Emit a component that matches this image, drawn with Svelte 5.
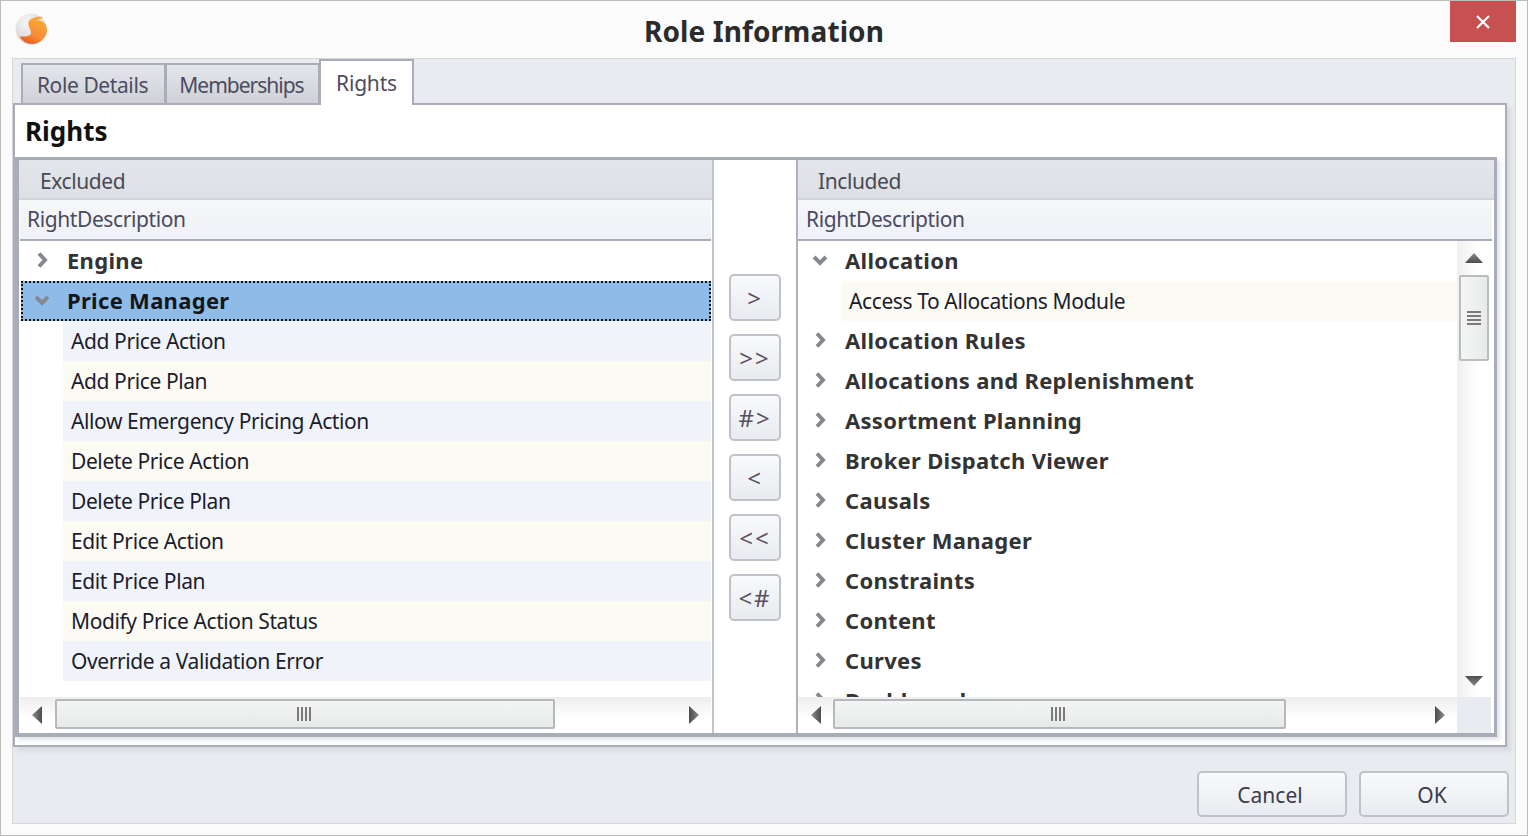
<script>
  const tabs = [
    { name: "Role Details", width: 144 },
    { name: "Memberships", width: 154 },
  ];
  const excluded = [
    { name: "Engine", open: false },
    {
      name: "Price Manager",
      open: true,
      selected: true,
      children: [
        "Add Price Action",
        "Add Price Plan",
        "Allow Emergency Pricing Action",
        "Delete Price Action",
        "Delete Price Plan",
        "Edit Price Action",
        "Edit Price Plan",
        "Modify Price Action Status",
        "Override a Validation Error",
      ],
    },
  ];
  const included = [
    { name: "Allocation", open: true, odd: true, children: ["Access To Allocations Module"] },
    { name: "Allocation Rules" },
    { name: "Allocations and Replenishment" },
    { name: "Assortment Planning" },
    { name: "Broker Dispatch Viewer" },
    { name: "Causals" },
    { name: "Cluster Manager" },
    { name: "Constraints" },
    { name: "Content" },
    { name: "Curves" },
    { name: "Dashboard" },
  ];
  const moves = [">", ">>", "#>", "<", "<<", "<#"];
</script>

{#snippet arrow(dir)}
  <svg class="arrow {dir}" width="18" height="10" viewBox="0 0 18 10">
    <defs>
      <linearGradient id="arrow-fill" x1="0" y1="0" x2="0" y2="1">
        <stop offset="0" stop-color="#8b8b8b" />
        <stop offset="1" stop-color="#4c4c4c" />
      </linearGradient>
    </defs>
    <polygon points="9,0 18,10 0,10" fill="url(#arrow-fill)" />
  </svg>
{/snippet}

{#snippet hbar(side)}
  <div class="hscroll {side}">
    {@render arrow("left")}
    <div class="hthumb">
      <svg width="14" height="14" viewBox="0 0 14 14">
        <path d="M1 0v14M5 0v14M9 0v14M13 0v14" stroke="#7b7b7b" stroke-width="2" />
      </svg>
    </div>
    {@render arrow("right")}
  </div>
{/snippet}

{#snippet tree(nodes)}
  {#each nodes as node}
    <div class="row" class:selected={node.selected}>
      <svg class="chevron" width="14" height="16" viewBox="0 0 14 16">
        {#if node.open}
          <path d="M1 5l6 6 6-6" fill="none" stroke="#85888f" stroke-width="4" />
        {:else}
          <path d="M4 1.500l6 6.500-6 6.500" fill="none" stroke="#85888f" stroke-width="4" />
        {/if}
      </svg>
      <span>{node.name}</span>
    </div>
    {#each node.children ?? [] as child, i}
      <div class="child" class:cream={node.odd ? i % 2 === 0 : i % 2 === 1}>{child}</div>
    {/each}
  {/each}
{/snippet}

<div class="window">
  <header class="titlebar">
    <div class="logo">
      <svg width="32" height="32" viewBox="0 0 32 32">
        <defs>
          <radialGradient id="ball" cx="0.4" cy="0.3" r="0.75">
            <stop offset="0" stop-color="#f6f6f6" />
            <stop offset="0.7" stop-color="#dcdcdc" />
            <stop offset="1" stop-color="#c9c9c9" />
          </radialGradient>
          <linearGradient id="ess" x1="0.75" y1="0.1" x2="0.25" y2="1">
            <stop offset="0" stop-color="#f9a63a" />
            <stop offset="0.6" stop-color="#f98c34" />
            <stop offset="1" stop-color="#ea5522" />
          </linearGradient>
          <filter id="soft" x="-10%" y="-10%" width="120%" height="120%">
            <feGaussianBlur stdDeviation="0.7" />
          </filter>
        </defs>
        <g filter="url(#soft)">
          <circle cx="16" cy="16" r="15.500" fill="url(#ball)" />
          <path
            d="M28 4C22 3 15 5 13.500 9 12.500 13 16 16 16 20 16 23 10 24 4.500 23.500 7 28 12 31 18 31 26 30 32 24 32 17 32 11 28 7 22 7.500 24 6.500 26 5.500 28 4z"
            fill="url(#ess)"
          />
        </g>
      </svg>
    </div>
    <h1>Role Information</h1>
    <div class="controls">
      <div class="close">
        <svg width="14" height="14" viewBox="0 0 14 14">
          <path d="M1 1l12 12M13 1L1 13" stroke="#fff" stroke-width="2.200" />
        </svg>
      </div>
    </div>
  </header>

  <div class="client">
    <div class="tabstrip">
      {#each tabs as tab}
        <div class="tab" style="width: {tab.width}px">{tab.name}</div>
      {/each}
      <div class="tab active">Rights</div>
    </div>

    <section class="page">
      <h2>Rights</h2>
      <div class="picker">
        <div class="pane left">
          <div class="group">Excluded</div>
          <div class="colhead">RightDescription</div>
          <div class="list">
            {@render tree(excluded)}
          </div>
          {@render hbar("short")}
        </div>

        <div class="movers">
          {#each moves as move}
            <button class="move">{move}</button>
          {/each}
        </div>

        <div class="pane right">
          <div class="group">Included</div>
          <div class="colhead">RightDescription</div>
          <div class="grid">
            <div class="list">
              {@render tree(included)}
            </div>
            <div class="vscroll">
              {@render arrow("up")}
              <div class="vthumb">
                <svg width="14" height="14" viewBox="0 0 14 14">
                  <path d="M0 1h14M0 5h14M0 9h14M0 13h14" stroke="#7b7b7b" stroke-width="2" />
                </svg>
              </div>
              {@render arrow("down")}
            </div>
            {@render hbar("long")}
            <div class="corner"></div>
          </div>
        </div>
      </div>
    </section>

    <footer class="actions">
      <button class="action">Cancel</button>
      <button class="action">OK</button>
    </footer>
  </div>
</div>

<style>
  :global(body) {
    background: #fff;
  }

  * {
    box-sizing: border-box;
  }

  .window {
    width: 1528px;
    height: 836px;
    border: 1px solid #bcbcbc;
    background: #fbfbfc;
    display: flex;
    flex-direction: column;
    font-family: "Noto Sans", sans-serif;
    font-size: 21px;
    letter-spacing: -0.4px;
    color: #222;
    overflow: hidden;
  }

  .titlebar {
    height: 57px;
    flex: none;
    display: grid;
    grid-template-columns: 1fr auto 1fr;
    align-items: start;
  }

  .logo {
    padding: 12px 0 0 14px;
    height: 44px;
  }

  .logo svg {
    display: block;
  }

  h1 {
    margin: 10px 0 0;
    font-size: 28px;
    line-height: 40px;
    font-weight: 700;
    letter-spacing: 0.1px;
    color: #2b2b2b;
  }

  .controls {
    display: flex;
    justify-content: flex-end;
    padding-right: 11px;
  }

  .close {
    width: 66px;
    height: 41px;
    background: #c75050;
    display: flex;
    align-items: center;
    justify-content: center;
  }

  .client {
    flex: none;
    margin-left: 11px;
    width: 1504px;
    height: 766px;
    border: 1px solid #d5d7da;
    background: #e8ebef;
  }

  .tabstrip {
    height: 44px;
    padding-left: 8px;
    display: flex;
    align-items: flex-end;
    position: relative;
    z-index: 1;
  }

  .tab {
    height: 40px;
    padding-right: 2px;
    border: 2px solid #a8adb7;
    border-right-width: 1px;
    border-bottom: none;
    background: linear-gradient(#e4e6ea, #ced1d7);
    color: #4c4c60;
    letter-spacing: -0.4px;
    line-height: 41px;
    text-align: center;
  }

  .tab:nth-child(2) {
    letter-spacing: -1px;
  }

  .tab.active {
    width: 95px;
    height: 46px;
    margin-bottom: -2px;
    padding-right: 0;
    border-right-width: 2px;
    background: #fff;
    letter-spacing: -0.2px;
    line-height: 45px;
  }

  .page {
    width: 1494px;
    height: 644px;
    border: 2px solid #a8adb7;
    background: #fff;
    box-shadow: 4px 4px 4px #d6d9df;
  }

  h2 {
    margin: 0;
    height: 52px;
    padding-left: 10px;
    font-size: 26px;
    line-height: 52px;
    font-weight: 700;
    letter-spacing: 0;
    color: #111;
  }

  .picker {
    width: 1482px;
    height: 580px;
    border: 3px solid #a8adb7;
    border-left-width: 4px;
    border-bottom-width: 4px;
    display: grid;
    grid-template-columns: 695px 82px 698px;
    box-shadow: 3px 3px 4px #e2e4e8;
  }

  .pane {
    display: flex;
    flex-direction: column;
    min-height: 0;
  }

  .pane.left {
    border-right: 2px solid #c0c4cb;
  }

  .pane.right {
    border-left: 2px solid #aeb2ba;
  }

  .group {
    height: 40px;
    flex: none;
    padding-left: 21px;
    line-height: 43px;
    color: #4a4a55;
    background: linear-gradient(#e3e6ea, #dcdfe4);
    border-bottom: 2px solid #d0d3d8;
  }

  .right .group {
    padding-left: 20px;
  }

  .colhead {
    height: 41px;
    flex: none;
    margin: 0 1px;
    padding-left: 7px;
    line-height: 39px;
    color: #4a4a60;
    background: linear-gradient(#f6f7f9, #eef1f6);
    border-bottom: 2px solid #a8adb7;
  }

  .right .colhead {
    margin: 0 2px 0 0;
    padding-left: 8px;
  }

  .list {
    overflow: hidden;
    height: 456px;
    flex: none;
    margin: 0 1px 0 2px;
  }

  .right .list {
    margin: 0;
    padding-left: 1px;
  }

  .row {
    height: 40px;
    display: flex;
    align-items: center;
    padding: 0 0 2px 14px;
    font-size: 22px;
    font-weight: 700;
    letter-spacing: 0.3px;
    color: #333;
  }

  .row.selected {
    background: #8fbbe9;
    outline: 2px dotted #111;
    outline-offset: -2px;
    color: #161616;
  }

  .chevron {
    flex: none;
    margin-right: 18px;
  }

  .child {
    height: 40px;
    margin-left: 42px;
    padding-left: 8px;
    line-height: 40px;
    color: #1c1c2c;
    background: #f0f4fa;
  }

  .child.cream {
    background: #fbfbf4;
  }

  .movers {
    padding: 114px 0 0 15px;
    display: flex;
    flex-direction: column;
    gap: 13px;
  }

  button {
    font: inherit;
    color: inherit;
    padding: 0;
  }

  .move {
    width: 52px;
    height: 47px;
    padding-bottom: 1px;
    border: 2px solid #bfc2c7;
    border-radius: 5px;
    background: linear-gradient(#f8fafc, #e8ebef);
    color: #5a5060;
    font-size: 24px;
    letter-spacing: 2px;
  }

  .grid {
    display: grid;
    grid-template-columns: 659px 34px;
    grid-template-rows: 456px 36px;
  }

  .vscroll {
    background: linear-gradient(90deg, #efefef, #fff 60%);
    display: flex;
    flex-direction: column;
    align-items: center;
    padding-top: 12px;
  }

  .vthumb {
    width: 30px;
    height: 86px;
    margin-top: 12px;
    border: 2px solid #b9bcc1;
    border-radius: 2px;
    background: linear-gradient(90deg, #f4f5f5, #e8e9e9);
    display: flex;
    align-items: center;
    justify-content: center;
  }

  .vthumb svg,
  .hthumb svg {
    display: block;
  }

  .vscroll .arrow.down {
    margin-top: auto;
    margin-bottom: 11px;
  }

  .hscroll {
    height: 36px;
    flex: none;
    margin-left: 1px;
    margin-right: 1px;
    background: linear-gradient(#eeeeee, #fff 60%);
    display: flex;
    align-items: center;
    padding-left: 8px;
  }

  .right .hscroll {
    margin: 0;
    padding-left: 9px;
  }

  .hthumb {
    height: 30px;
    margin-bottom: 2px;
    border: 2px solid #b5b8bd;
    border-radius: 2px;
    background: linear-gradient(#f3f4f4, #e8e9e9);
    display: flex;
    align-items: center;
    justify-content: center;
  }

  .short .hthumb {
    width: 500px;
    margin-left: 9px;
    padding-right: 3px;
  }

  .long .hthumb {
    width: 453px;
    margin-left: 8px;
    padding-right: 4px;
  }

  .short .arrow.right {
    margin-left: 130px;
  }

  .long .arrow.right {
    margin-left: 145px;
  }

  .corner {
    background: #e8ebef;
  }

  .arrow {
    flex: none;
    display: block;
  }

  .arrow.down {
    transform: rotate(180deg);
  }

  .arrow.left {
    transform: rotate(-90deg);
  }

  .arrow.right {
    transform: rotate(90deg);
  }

  .actions {
    display: flex;
    justify-content: flex-end;
    gap: 12px;
    padding: 24px 6px 0 0;
  }

  .action {
    width: 150px;
    height: 46px;
    padding: 2px 4px 0 0;
    border: 2px solid #bfc2c7;
    border-radius: 5px;
    background: linear-gradient(#f8fafc, #e8ebef);
    color: #3c3c4c;
  }
</style>
